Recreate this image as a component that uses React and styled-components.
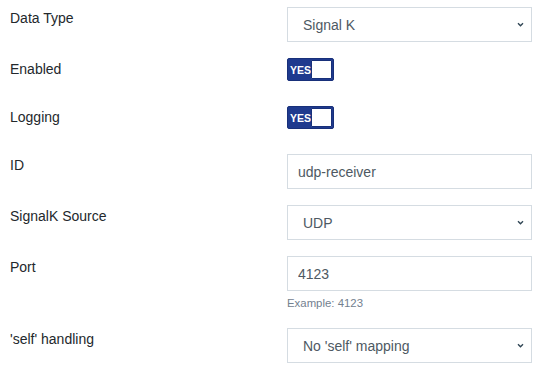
import React from "react";
import styled, { createGlobalStyle } from "styled-components";

const GlobalStyle = createGlobalStyle`
  html, body { margin: 0; padding: 0; background: #fff; }
  body { font-family: "Liberation Sans", Arial, sans-serif; }
`;

const Form = styled.div`
  display: flex;
  flex-direction: column;
  gap: 16px;
  padding: 7px 8px 0 10px;
`;

const Row = styled.div`
  display: grid;
  grid-template-columns: 277px 245px;
  align-items: start;
`;

const Label = styled.div`
  font-size: 14px;
  line-height: 21px;
  color: #23282c;
  margin-top: 1px;
`;

const Control = styled.div`
  display: flex;
  flex-direction: column;
`;

const SwitchCell = styled.div`
  height: 32px;
`;

const chevron =
  "data:image/svg+xml;utf8," +
  encodeURIComponent(
    '<svg xmlns="http://www.w3.org/2000/svg" width="7" height="5" viewBox="0 0 7 5"><path d="M1 1.2 L3.5 3.7 L6 1.2" fill="none" stroke="#2f4554" stroke-width="1.4"/></svg>'
  );

const Select = styled.select`
  appearance: none;
  -webkit-appearance: none;
  box-sizing: border-box;
  width: 100%;
  height: 35px;
  margin: 0;
  border: 1px solid #d5dce2;
  border-radius: 0;
  background: #fff url("${chevron}") no-repeat right 7px center;
  padding: 0 24px 0 15px;
  font-family: "Liberation Sans", Arial, sans-serif;
  font-size: 14px;
  color: #4e5963;
  outline: none;
`;

const Input = styled.input`
  box-sizing: border-box;
  width: 100%;
  height: 35px;
  margin: 0;
  border: 1px solid #d5dce2;
  border-radius: 0;
  padding: 0 10px;
  font-family: "Liberation Sans", Arial, sans-serif;
  font-size: 14px;
  color: #4e5963;
  outline: none;
`;

const Help = styled.div`
  margin-top: 4px;
  font-size: 11.4px;
  line-height: 17px;
  color: #73818f;
`;

const SwitchBox = styled.div`
  box-sizing: border-box;
  width: 47px;
  height: 23px;
  display: flex;
  align-items: center;
  justify-content: space-between;
  padding: 2px 1px 2px 2px;
  background: ${(p) => (p.$on ? "#1f3a8e" : "#c8ced3")};
  border: 1px solid #18307a;
  border-radius: 2px;
`;

const SwitchText = styled.span`
  font-family: "Liberation Sans", Arial, sans-serif;
  font-size: 10.5px;
  font-weight: 700;
  color: #fff;
`;

const Knob = styled.span`
  box-sizing: border-box;
  width: 21px;
  height: 19px;
  background: #fff;
  border: 1px solid #18307a;
  border-radius: 1px;
`;

function Switch({ on }) {
  return (
    <SwitchCell>
      <SwitchBox $on={on}>
        <SwitchText>YES</SwitchText>
        <Knob />
      </SwitchBox>
    </SwitchCell>
  );
}

export default function App() {
  return (
    <>
      <GlobalStyle />
      <Form>
        <Row>
          <Label>Data Type</Label>
          <Control>
            <Select defaultValue="sk">
              <option value="sk">Signal K</option>
            </Select>
          </Control>
        </Row>
        <Row>
          <Label>Enabled</Label>
          <Switch on />
        </Row>
        <Row>
          <Label>Logging</Label>
          <Switch on />
        </Row>
        <Row>
          <Label>ID</Label>
          <Control>
            <Input defaultValue="udp-receiver" />
          </Control>
        </Row>
        <Row>
          <Label>SignalK Source</Label>
          <Control>
            <Select defaultValue="udp">
              <option value="udp">UDP</option>
            </Select>
          </Control>
        </Row>
        <Row>
          <Label>Port</Label>
          <Control>
            <Input defaultValue="4123" />
            <Help>Example: 4123</Help>
          </Control>
        </Row>
        <Row>
          <Label>'self' handling</Label>
          <Control>
            <Select defaultValue="none">
              <option value="none">No 'self' mapping</option>
            </Select>
          </Control>
        </Row>
      </Form>
    </>
  );
}
